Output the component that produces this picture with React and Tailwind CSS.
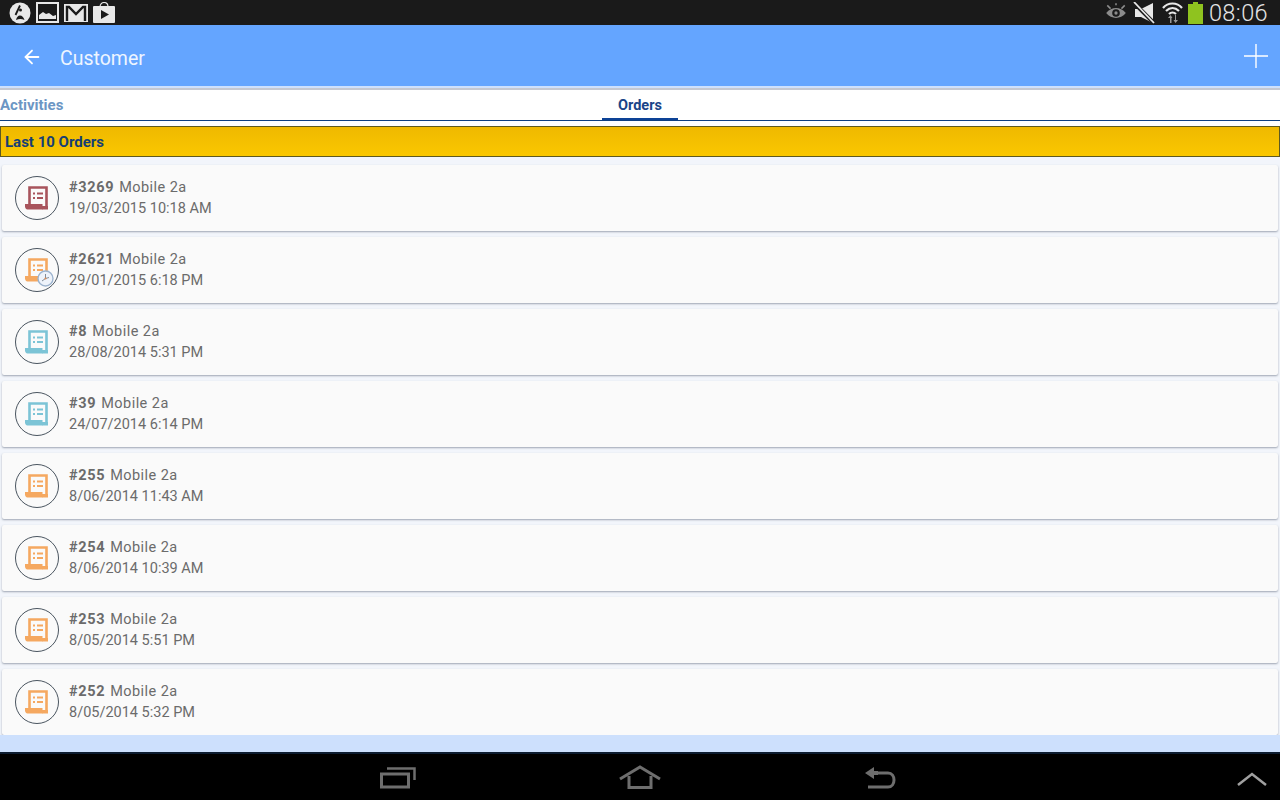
import { ArrowLeft } from 'lucide-react';

const ORDERS = [
  { id: '#3269', date: '19/03/2015 10:18 AM', color: '#a8545c' },
  { id: '#2621', date: '29/01/2015 6:18 PM', color: '#f5a860', clock: true },
  { id: '#8', date: '28/08/2014 5:31 PM', color: '#7cc4d6' },
  { id: '#39', date: '24/07/2014 6:14 PM', color: '#7cc4d6' },
  { id: '#255', date: '8/06/2014 11:43 AM', color: '#f5a860' },
  { id: '#254', date: '8/06/2014 10:39 AM', color: '#f5a860' },
  { id: '#253', date: '8/05/2014 5:51 PM', color: '#f5a860' },
  { id: '#252', date: '8/05/2014 5:32 PM', color: '#f5a860' },
];

function ScrollIcon({ color, clock }) {
  return (
    <div className="relative w-[44px] h-[44px] rounded-full border border-[#4a5560] shrink-0 flex items-center justify-center">
      <svg width="26" height="26" viewBox="0 0 26 26" fill="none">
        <path d="M5.500 19V2.500h17V21" stroke={color} strokeWidth="2.600" />
        <path d="M1 19h17.500V24.500H3.500C2 24.500 1 23 1 21.500z" fill={color} />
        <path d="M18 21h6v3.500h-6z" fill={color} />
        <path d="M9 8.500h2M13 8.500h6M9 13h2M13 13h6" stroke={color} strokeWidth="1.800" />
      </svg>
      {clock && (
        <svg className="absolute left-[21px] top-[21px]" width="17" height="17" viewBox="0 0 17 17" fill="none">
          <circle cx="8.500" cy="8.500" r="7.500" fill="#eef3fa" stroke="#9db4cf" strokeWidth="1.400" />
          <path d="M8.500 4v4.500L5 11M8.500 8.500l3.500-1" stroke="#76808c" strokeWidth="0.900" />
          <circle cx="8.500" cy="8.500" r="1" fill="#e08a50" />
        </svg>
      )}
    </div>
  );
}

function OrderRow({ order }) {
  return (
    <div className="h-[66px] mx-[2px] bg-[#fafafa] rounded-[2px] shadow-[0_1px_2px_rgba(90,100,120,0.55)] flex items-center pl-[13px] gap-[10px]">
      <ScrollIcon color={order.color} clock={order.clock} />
      <div className="text-[14.5px] leading-[21px] text-[#6b6b6b]">
        <div className="tracking-[0.45px]">
          <span className="font-bold tracking-[0.65px] mr-[1px]">{order.id}</span> Mobile 2a
        </div>
        <div>{order.date}</div>
      </div>
    </div>
  );
}

function StatusBar() {
  return (
    <div className="h-[25px] bg-[#1a1a1a] flex items-center shrink-0">
      <div className="flex items-center gap-[5px] pl-[9px]">
        <svg width="22" height="22" viewBox="0 0 22 22">
          <circle cx="11" cy="11" r="10.500" fill="#e8e8e8" />
          <path d="M11 3.500 6.500 13" stroke="#1a1a1a" strokeWidth="1.800" fill="none" />
          <path d="M7 18c.8-3 2-4.500 4-4.500s3.500 1.500 4.500 4.500c-3-1.500-5.500-1.500-8.500 0z" fill="#1a1a1a" />
          <circle cx="11.500" cy="8" r="1.500" fill="#1a1a1a" />
        </svg>
        <svg width="23" height="21" viewBox="0 0 23 21">
          <rect x="1" y="1" width="21" height="19" fill="none" stroke="#e8e8e8" strokeWidth="2" />
          <path d="M3 17v-4l4-3 3 2 3-1 4 3 3-1v4z" fill="#e8e8e8" />
        </svg>
        <svg width="24" height="18" viewBox="0 0 24 18">
          <rect width="24" height="18" fill="#e8e8e8" />
          <path d="M3 17V3h2l7 7 7-7h2v14" fill="none" stroke="#1a1a1a" strokeWidth="2.400" />
        </svg>
        <svg width="22" height="21" viewBox="0 0 22 21">
          <path d="M7 5c0-6 8-6 8 0" fill="none" stroke="#e8e8e8" strokeWidth="1.200" />
          <rect y="4" width="22" height="17" rx="1" fill="#e8e8e8" />
          <path d="M8 8l8 4.500-8 4.500z" fill="#1a1a1a" />
        </svg>
      </div>
      <div className="ml-auto flex items-center pr-[12px]">
        <svg width="24" height="20" viewBox="0 0 22 18" className="mr-[5px]">
          <path d="M2 9c5-6 13-6 18 0-5 6-13 6-18 0z" fill="#8c8c8c" />
          <circle cx="11" cy="9" r="3.500" fill="#1a1a1a" />
          <circle cx="11" cy="9" r="1.500" fill="#8c8c8c" />
          <path d="M3 2l3 3M19 2l-3 3M11 0v2" stroke="#8c8c8c" strokeWidth="1.400" />
        </svg>
        <svg width="22" height="22" viewBox="0 0 22 22" className="mr-[7px]">
          <path d="M2 7h6l12-6v20L8 15H2z" fill="#e8e8e8" />
          <path d="M1 1l20 20" stroke="#1a1a1a" strokeWidth="4" />
          <path d="M1 0l20 21" stroke="#e8e8e8" strokeWidth="1.800" />
        </svg>
        <svg width="21" height="23" viewBox="0 0 21 23" className="mr-[5px]">
          <path d="M1 7c5-6 14-6 19 0M4 10c4-4 9-4 13 0M7 13c2-2 5-2 7 0" fill="none" stroke="#e8e8e8" strokeWidth="2.200" />
          <path d="M8 22v-5H6l2.500-3 2 3H9.500v5zM13 14v5h-1.500l2 3 2.500-3H14v-5z" fill="#9a9a9a" />
        </svg>
        <svg width="15" height="22" viewBox="0 0 15 22" className="mr-[6px]">
          <path d="M5 0h5v2h5v20H0V2h5z" fill="#8fc31f" />
        </svg>
        <span className="text-[23.5px] leading-[23px] mt-[2px] text-[#e4e4e4] font-['Roboto',sans-serif] font-light tracking-[0.4px]">08:06</span>
      </div>
    </div>
  );
}

function NavBar() {
  return (
    <div className="h-[48px] bg-black border-t-2 border-[#0c1c30] flex items-center relative shrink-0">
      <div className="w-full flex items-center justify-center gap-[203px] pr-[4px]">
        <svg width="36" height="24" viewBox="0 0 36 24" fill="none" stroke="#6e6e6e" strokeWidth="3">
          <path d="M1.500 9h27v13h-27z" />
          <path d="M7 3.500h27.500V15" strokeWidth="2.500" />
        </svg>
        <svg width="42" height="24" viewBox="0 0 42 24" fill="none" stroke="#6e6e6e" strokeWidth="3">
          <path d="M1 14 21 2l20 12" />
          <path d="M10 11v11.500h22V11" />
        </svg>
        <svg width="32" height="24" viewBox="0 0 32 24" fill="none" stroke="#6e6e6e">
          <path d="M1 8l9-6v4h4v4h-4v4z" fill="#6e6e6e" stroke="none" />
          <path d="M10 8h14c8 0 8 14 0 14H4" strokeWidth="3" />
        </svg>
      </div>
      <svg className="absolute right-[13px] top-[18px]" width="30" height="15" viewBox="0 0 30 15" fill="none" stroke="#a0a0a0" strokeWidth="2.500">
        <path d="M1 13 15 2l14 11" />
      </svg>
    </div>
  );
}

export default function App() {
  return (
    <div className="w-[1280px] h-[800px] flex flex-col bg-[#cde0fd] overflow-hidden font-['Roboto',sans-serif]">
      <StatusBar />

      <div className="h-[61px] bg-[#64a5ff] flex items-center pl-[21px] pr-[12px] shrink-0 pt-[5px]">
        <ArrowLeft size={22} strokeWidth={2} className="text-white -mt-[2px]" />
        <span className="ml-[17px] mt-[1px] text-[19.500px] text-[#eef5ff]">Customer</span>
        <svg className="ml-auto -mt-[4px]" width="24" height="24" viewBox="0 0 24 24" stroke="#ffffff" strokeWidth="1.400">
          <path d="M12 0v24M0 12h24" />
        </svg>
      </div>
      <div className="h-[2px] bg-[#cde0fd] shrink-0" />
      <div className="h-[2px] bg-[#c4c8d2] shrink-0" />

      {/* Tabs */}
      <div className="h-[31px] bg-white border-b border-[#0f3f80] relative flex items-center shrink-0">
        <span className="absolute left-0 top-[4px] text-[15px] font-bold text-[#6c96c4]">Activities</span>
        <div className="mx-auto w-[76px] h-[30px] border-b-[2px] border-[#0d4296] text-center pt-[5px] text-[14.500px] font-bold text-[#1a4488]">
          Orders
        </div>
      </div>
      <div className="h-[5px] bg-white shrink-0" />

      <div className="h-[31px] bg-linear-to-b from-[#efb900] to-[#fac700] border border-[#5e5a20] flex items-center pl-[4px] pt-[1px] text-[15px] font-bold text-[#163f75] shrink-0">
        Last 10 Orders
      </div>

      {/* Order list */}
      <div className="flex-1 bg-[#f2f5fb] pt-[8px] flex flex-col gap-[6px]">
        {ORDERS.map((o) => (
          <OrderRow key={o.id} order={o} />
        ))}
      </div>
      <div className="h-[17px] bg-[#cde0fd] shrink-0" />

      <NavBar />
    </div>
  );
}
